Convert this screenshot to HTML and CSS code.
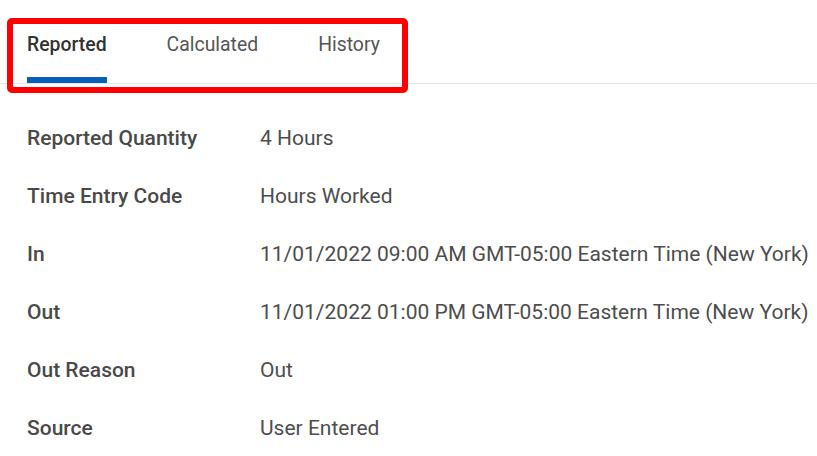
FILE: index.html
```html
<!DOCTYPE html>
<html>
<head>
<meta charset="utf-8">
<link rel="stylesheet" href="styles.css">
</head>
<body>
<div class="page">
  <nav class="tabs">
    <div class="tab active">Reported</div>
    <div class="tab">Calculated</div>
    <div class="tab">History</div>
  </nav>
  <div class="highlight"></div>
  <dl class="details">
    <div class="row"><dt>Reported Quantity</dt><dd>4 Hours</dd></div>
    <div class="row"><dt>Time Entry Code</dt><dd>Hours Worked</dd></div>
    <div class="row"><dt>In</dt><dd>11/01/2022 09:00 AM GMT-05:00 Eastern Time (New York)</dd></div>
    <div class="row"><dt>Out</dt><dd>11/01/2022 01:00 PM GMT-05:00 Eastern Time (New York)</dd></div>
    <div class="row"><dt>Out Reason</dt><dd>Out</dd></div>
    <div class="row"><dt>Source</dt><dd>User Entered</dd></div>
  </dl>
</div>
</body>
</html>
```
FILE: styles.css
```css
html, body {
  margin: 0;
  padding: 0;
  background: #fff;
}
body {
  font-family: Roboto, "Liberation Sans", sans-serif;
  width: 817px;
  height: 456px;
  overflow: hidden;
}
.page {
  position: relative;
}
.tabs {
  display: flex;
  gap: 60px;
  padding-left: 27px;
  border-bottom: 1px solid #e3e5e8;
  height: 83px;
}
.tab {
  font-size: 19.4px;
  line-height: 24px;
  padding-top: 33px;
  color: #555;
  box-sizing: border-box;
  height: 83px;
}
.tab.active {
  color: #333;
  font-weight: 500;
  border-bottom: 6px solid #0a5fb8;
}
.highlight {
  position: absolute;
  left: 7px;
  top: 18px;
  width: 401px;
  height: 75px;
  box-sizing: border-box;
  border: 6px solid #ff0000;
  border-radius: 5px;
  pointer-events: none;
}
.details {
  margin: 0;
  padding: 25px 0 0 27px;
}
.row {
  display: grid;
  grid-template-columns: 233px 1fr;
  padding: 17px 0;
  font-size: 21px;
  line-height: 24px;
}
dt {
  font-weight: 500;
  color: #494949;
}
dd {
  margin: 0;
  color: #4d4d4d;
  white-space: nowrap;
}
```
